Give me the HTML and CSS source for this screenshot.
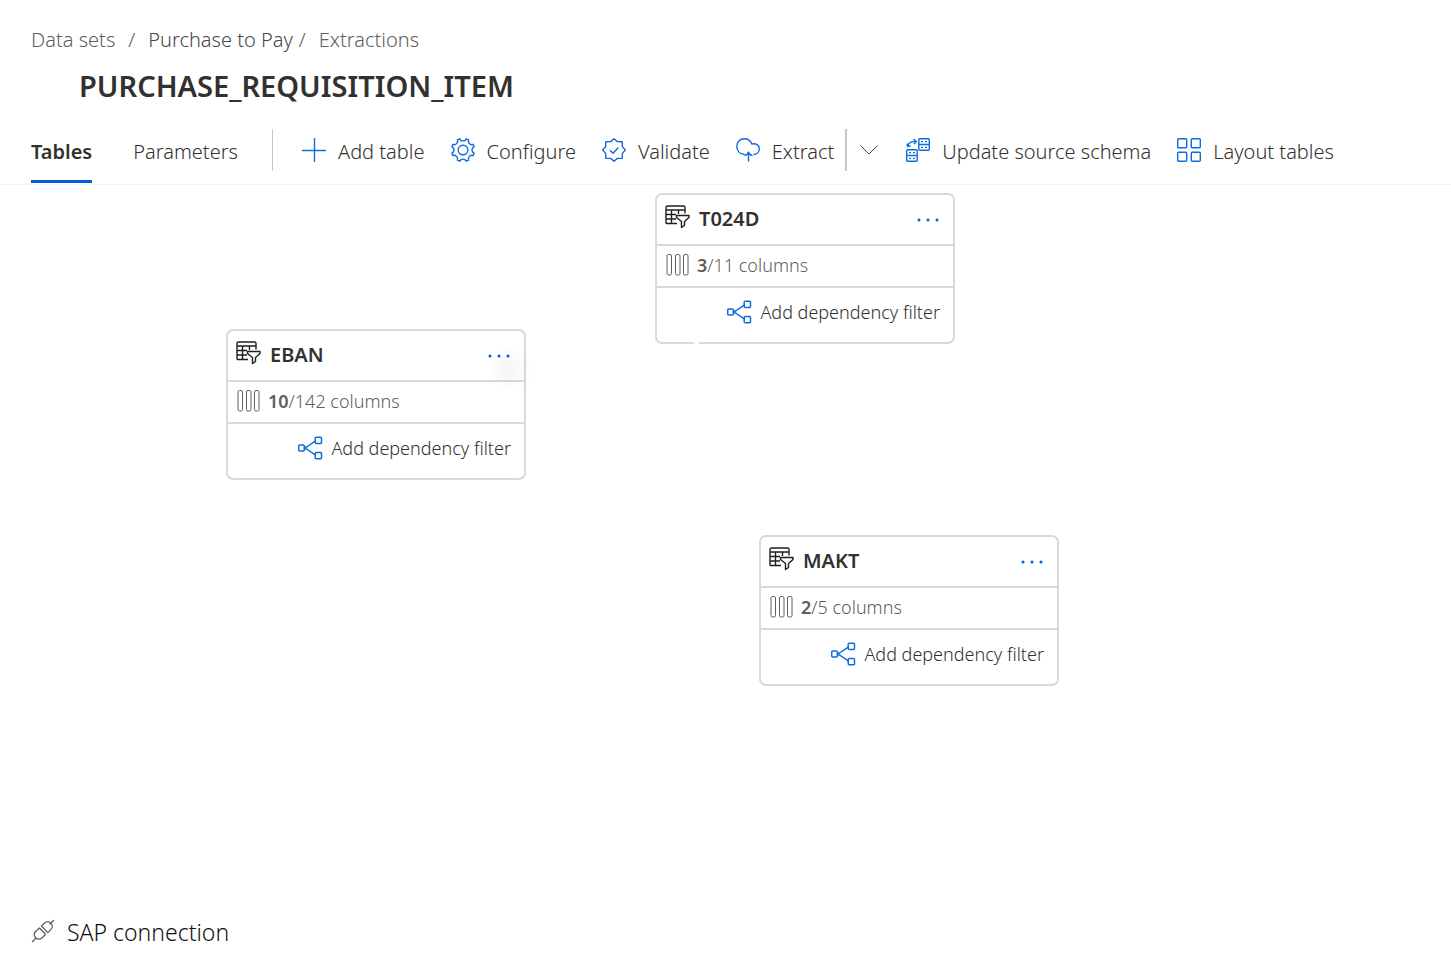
FILE: index.html
```html
<!DOCTYPE html>
<html lang="en">
<head>
<meta charset="utf-8">
<title>PURCHASE_REQUISITION_ITEM</title>
<link rel="stylesheet" href="styles.css">
</head>
<body>
<svg class="defs" aria-hidden="true">
  <symbol id="table-filter" viewBox="0 0 26 24">
    <path d="M1 18.500V2.500q0-1.500 1.500-1.500h16q1.500 0 1.500 1.500v6M1 18.500h11M1 5h19M1 9.500h10M1 14h10M6.500 5v13.500M13.500 5v4"/>
    <path d="M11.500 10.500h12.500v2l-4.500 4v4l-3 2v-6l-5-4z"/>
  </symbol>
  <symbol id="columns" viewBox="0 0 24 22">
    <rect x="1" y=".5" width="4.500" height="20.500" rx="1.500"/>
    <rect x="9.500" y=".5" width="4.500" height="20.500" rx="1.500"/>
    <rect x="17.500" y=".5" width="4.500" height="20.500" rx="1.500"/>
  </symbol>
  <symbol id="share" viewBox="0 0 26 24">
    <rect x="1.700" y="9" width="5.600" height="6" rx="1"/>
    <rect x="18.200" y="1.200" width="6.300" height="6.300" rx="1"/>
    <rect x="18.200" y="16.500" width="6.300" height="6.300" rx="1"/>
    <path d="M7.300 12l3-1.500 7.900-5.300M7.300 12l3 1.500 7.900 5.300"/>
  </symbol>
  <symbol id="more" viewBox="0 0 24 6">
    <circle cx="3" cy="3" r="1.500"/><circle cx="12" cy="3" r="1.500"/><circle cx="21" cy="3" r="1.500"/>
  </symbol>
</svg>

<div class="page">
  <header class="header">
    <nav class="crumbs" aria-label="Breadcrumb">
      <a href="#">Data sets</a><span class="slash">/</span><a class="current" href="#">Purchase to Pay</a><span class="slash tight">/</span><a href="#">Extractions</a>
    </nav>
    <h1 class="title">PURCHASE_REQUISITION_ITEM</h1>
    <div class="bar">
      <nav class="tabs">
        <a class="tab active" href="#">Tables</a>
        <a class="tab" href="#">Parameters</a>
      </nav>
      <div class="divider"></div>
      <div class="tools">
        <button class="tool" type="button">
          <svg class="icon" viewBox="0 0 24 24"><path d="M12.500 0v24M0 12.500h24"/></svg>Add table
        </button>
        <button class="tool" type="button">
          <svg class="icon" viewBox="0 0 24 24"><path d="M8.900.8C9.600 3.600 14.400 3.600 15.100.8L17.700 1.900C16.200 4.400 19.600 7.800 22.100 6.300L23.200 8.900C20.400 9.600 20.400 14.400 23.200 15.100L22.100 17.700C19.600 16.200 16.200 19.600 17.700 22.100L15.100 23.200C14.400 20.400 9.600 20.400 8.900 23.200L6.300 22.100C7.800 19.600 4.400 16.200 1.900 17.700L.8 15.100C3.600 14.400 3.600 9.600.8 8.900L1.900 6.300C4.400 7.800 7.800 4.400 6.300 1.900Z"/><circle cx="12" cy="12" r="4.800"/></svg>Configure
        </button>
        <button class="tool" type="button">
          <svg class="icon" viewBox="0 0 24 24"><path d="M12 .7L15.400 3.600 20.200 3.800 20.400 8.600 23.300 12 20.400 15.400 20.200 20.200 15.400 20.400 12 23.300 8.600 20.400 3.800 20.200 3.600 15.400.7 12 3.600 8.600 3.800 3.800 8.600 3.600Z"/><path d="M7.800 12.300l3.200 3 5.400-5.800"/></svg>Validate
        </button>
        <div class="split">
          <button class="tool" type="button">
            <svg class="icon" viewBox="0 0 24 24"><path d="M8.500 16.500C3 16 .8 12 .8 8.500.8 4 4 .8 8.200.8c4 0 6.600 2.200 7.600 5.200 4.200-1.200 7.500 1.300 7.500 4.800 0 3.200-2.300 5.700-5.800 5.700M12.500 23.500v-9M8.500 17.500c2.200-.3 3.600-1.500 4-3.300.4 1.800 1.800 3 4 3.300"/></svg>Extract
          </button>
          <button class="chevron" type="button" aria-label="More extract options">
            <svg class="chevron-icon" viewBox="0 0 18 10"><path d="M.5.5L9 9 17.500.5"/></svg>
          </button>
        </div>
        <button class="tool" type="button">
          <svg class="icon" viewBox="0 0 24 24"><rect x="12.800" y=".7" width="10.500" height="11.600" rx="1"/><path d="M12.800 6.500h10.500M15 3.600h2m2 0h2M15 9.400h2m2 0h2"/><rect x=".7" y="11.700" width="10.500" height="11.600" rx="1"/><path d="M.7 17.500h10.500M3 14.600h2m2 0h2M3 20.400h2m2 0h2M1.500 8C2.500 5 6 3 9.800 3.500M1 5.500l.6 3 3-.8M7.500 1l2.800 2.500-2.300 2.500"/></svg>Update source schema
        </button>
        <button class="tool" type="button">
          <svg class="icon" viewBox="0 0 24 24"><rect x=".7" y=".7" width="9" height="9" rx="1"/><rect x="14.300" y=".7" width="9" height="9" rx="1"/><rect x=".7" y="14.300" width="9" height="9" rx="1"/><rect x="14.300" y="14.300" width="9" height="9" rx="1"/></svg>Layout tables
        </button>
      </div>
    </div>
  </header>

  <main class="canvas">
    <article class="card t024d">
      <div class="card-head"><svg class="filter-icon"><use href="#table-filter"/></svg><h2>T024D</h2><button class="more" type="button" aria-label="T024D options"><svg><use href="#more"/></svg></button></div>
      <div class="card-columns"><svg class="columns-icon"><use href="#columns"/></svg><span><b>3</b>/11 columns</span></div>
      <div class="card-foot"><button class="add" type="button"><svg><use href="#share"/></svg>Add dependency filter</button></div>
      <i class="handle"></i>
    </article>
    <article class="card eban">
      <div class="card-head"><svg class="filter-icon"><use href="#table-filter"/></svg><h2>EBAN</h2><button class="more" type="button" aria-label="EBAN options"><svg><use href="#more"/></svg></button></div>
      <div class="card-columns"><svg class="columns-icon"><use href="#columns"/></svg><span><b>10</b>/142 columns</span></div>
      <div class="card-foot"><button class="add" type="button"><svg><use href="#share"/></svg>Add dependency filter</button></div>
    </article>
    <article class="card makt">
      <div class="card-head"><svg class="filter-icon"><use href="#table-filter"/></svg><h2>MAKT</h2><button class="more" type="button" aria-label="MAKT options"><svg><use href="#more"/></svg></button></div>
      <div class="card-columns"><svg class="columns-icon"><use href="#columns"/></svg><span><b>2</b>/5 columns</span></div>
      <div class="card-foot"><button class="add" type="button"><svg><use href="#share"/></svg>Add dependency filter</button></div>
    </article>
  </main>

  <footer class="footer">
    <svg class="plug" viewBox="0 0 24 24"><path d="M1 23l4.500-4.500M18.500 5.500L23 1M8.500 9L5 12c-2.300 2.200-2 4.800-.3 6.700 1.800 1.900 4.600 2 6.800-.2l3-3.200zM10.500 7l3-3c2-2 4.500-1.800 6.300 0 1.800 1.800 2 4.600 0 6.600l-3 3z"/></svg>
    <span>SAP connection</span>
  </footer>
</div>
</body>
</html>
```
FILE: styles.css
```css
* { box-sizing: border-box; }

body {
  margin: 0;
  background: #fff;
  color: #323130;
  font-family: "Noto Sans", "Open Sans", sans-serif;
  font-size: 20px;
  font-weight: 300;
}

button {
  border: 0;
  padding: 0;
  background: none;
  color: inherit;
  font: inherit;
  cursor: pointer;
}

a { color: inherit; text-decoration: none; }

svg {
  flex: none;
  fill: none;
  stroke: currentColor;
  stroke-linejoin: round;
}

.defs { position: absolute; width: 0; height: 0; }

.page {
  display: flex;
  flex-direction: column;
  min-height: 100vh;
}

.header {
  padding-top: 26px;
  border-bottom: 1px solid #f3f2f1;
}

.crumbs {
  display: flex;
  padding-left: 31px;
  color: #605e5c;
  line-height: 28px;
}

.current { color: #484644; }
.slash { margin: 0 13px; }
.slash.tight { margin-left: 6px; }

.title {
  margin: 13px 0 0 79px;
  font-size: 29px;
  font-weight: 600;
  line-height: 38px;
}

.bar {
  display: flex;
  align-items: flex-start;
  margin-top: 24px;
  padding: 0 0 1px 31px;
  line-height: 42px;
  white-space: nowrap;
}

.tabs { display: flex; gap: 41px; }
.tab { height: 54px; padding-top: 2px; }
.tab.active { border-bottom: 3px solid #015cda; font-weight: 600; }

.divider {
  width: 1px;
  height: 42px;
  margin: 0 29px 0 34px;
  background: #c8c6c4;
}

.tools { display: flex; gap: 26px; }
.tool { display: flex; align-items: center; gap: 12px; height: 42px; padding-top: 4px; }
.icon { width: 24px; height: 24px; margin-bottom: 4px; overflow: visible; color: #0f6be0; stroke-width: 1.4; }
.split { display: flex; }

.chevron {
  display: flex;
  align-items: center;
  height: 42px;
  margin-left: 11px;
  padding: 0 2px 0 13px;
  border-left: 2px solid #c8c6c4;
}

.chevron-icon { width: 18px; height: 10px; color: #484644; }

.canvas {
  position: relative;
  flex: 1;
  font-size: 18px;
}

.card {
  position: absolute;
  width: 300px;
  border: 2px solid #dad9d8;
  border-radius: 7px;
  background: #fff;
}

.t024d { left: 655px; top: 8px; }
.eban { left: 226px; top: 144px; }
.makt { left: 759px; top: 350px; }

.eban::after {
  content: "";
  position: absolute;
  right: -10px;
  top: 14px;
  width: 48px;
  height: 48px;
  background: radial-gradient(closest-side, rgba(0, 0, 0, 0.04), transparent);
  pointer-events: none;
}

.card-head {
  display: flex;
  align-items: center;
  height: 51px;
  padding: 0 13px 3px 8px;
  border-bottom: 2px solid #dad9d8;
}

.card-head h2 { flex: 1; margin: 0 0 0 8px; font-size: 20px; font-weight: 600; }
.filter-icon { width: 26px; height: 24px; margin-bottom: 2px; color: #201f1e; stroke-width: 1.4; }
.more { display: flex; padding: 9px 0 5px; color: #015cda; }
.more svg { width: 24px; height: 6px; fill: currentColor; stroke: none; }

.card-columns {
  display: flex;
  align-items: center;
  gap: 7px;
  height: 42px;
  padding: 0 0 2px 9px;
  border-bottom: 2px solid #dad9d8;
  color: #605e5c;
}

.card-columns b { font-weight: 600; }
.columns-icon { width: 24px; height: 22px; }

.card-foot {
  display: flex;
  justify-content: flex-end;
  height: 54px;
  padding: 11px 13px;
}

.add { display: flex; align-items: center; gap: 8px; height: 26px; white-space: nowrap; }
.add svg { width: 26px; height: 24px; color: #0f6be0; stroke-width: 1.5; }

.handle {
  position: absolute;
  left: 37px;
  bottom: -3px;
  width: 5px;
  height: 5px;
  border-radius: 50%;
  background: #fff;
}

.footer {
  display: flex;
  align-items: center;
  gap: 12px;
  padding: 0 31px 18px;
  color: #111;
  font-size: 23px;
  line-height: 32px;
}

.plug { width: 24px; height: 24px; margin-bottom: 3px; color: #605e5c; stroke-width: 1.3; }
```
